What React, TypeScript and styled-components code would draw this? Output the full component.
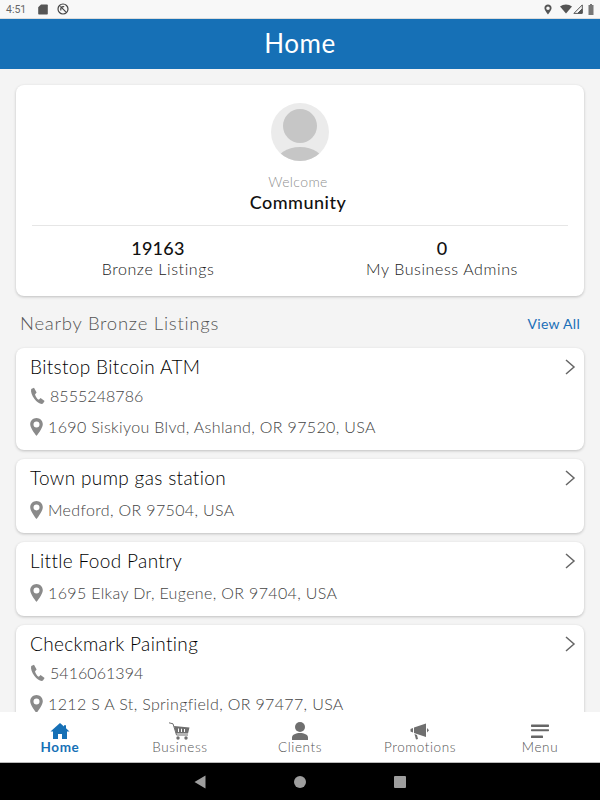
import React from "react";
import styled, { createGlobalStyle } from "styled-components";

const Global = createGlobalStyle`
  html, body { margin: 0; padding: 0; }
  body { font-family: Lato, "Noto Sans", sans-serif; background: #000; }
`;

const Screen = styled.div`
  width: 600px;
  height: 800px;
  display: flex;
  flex-direction: column;
  overflow: hidden;
  background: #f4f4f4;
`;

const StatusBar = styled.div`
  height: 18px;
  flex: none;
  display: flex;
  align-items: center;
  padding: 0 6px;
  background: #f8f8f8;
  border-bottom: 1px solid #dcdcdc;
  color: #666;
  font: 400 10.5px Roboto, sans-serif;
`;

const StatusLeft = styled.div`
  display: flex;
  align-items: center;
  gap: 9px;
  flex: 1;
  & > span { margin-right: 3px; }
`;

const StatusRight = styled.div`
  display: flex;
  align-items: center;
  gap: 5px;
`;

const Header = styled.header`
  height: 50px;
  flex: none;
  background: #1670b6;
  color: #fff;
  display: flex;
  align-items: center;
  justify-content: center;
  padding-bottom: 2px;
  box-sizing: border-box;
  font-size: 26px;
  font-weight: 400;
  letter-spacing: 0.6px;
`;

const Content = styled.main`
  flex: 1;
  min-height: 0;
  overflow: hidden;
  padding: 16px 16px 0;
`;

const Card = styled.section`
  background: #fff;
  border-radius: 8px;
  box-shadow: 0 1px 3px rgba(0, 0, 0, 0.22);
`;

const ProfileCard = styled(Card)`
  height: 211px;
  padding-top: 18px;
  box-sizing: border-box;
  display: flex;
  flex-direction: column;
  align-items: center;
`;

const Greeting = styled.div`
  margin-top: 12px;
  padding-right: 4px;
  text-align: center;
`;

const Welcome = styled.div`
  font-size: 14px;
  line-height: 18px;
  font-weight: 300;
  color: #8f8f8f;
  letter-spacing: 0.4px;
`;

const Name = styled.div`
  font-size: 18px;
  line-height: 23px;
  color: #111;
  font-weight: 500;
  letter-spacing: 0.5px;
`;

const Divider = styled.hr`
  align-self: stretch;
  margin: 11px 16px 0;
  border: none;
  border-top: 1px solid #e6e6e6;
`;

const Stats = styled.div`
  align-self: stretch;
  padding-top: 11px;
  display: grid;
  grid-template-columns: 1fr 1fr;
`;

const Stat = styled.div`
  text-align: center;
`;

const StatValue = styled.div`
  font-size: 18px;
  line-height: 22px;
  font-weight: 500;
  color: #111;
  letter-spacing: 0.3px;
`;

const StatLabel = styled.div`
  font-size: 16px;
  line-height: 20px;
  font-weight: 300;
  color: #222;
  letter-spacing: 0.6px;
`;

const SectionHead = styled.div`
  display: flex;
  justify-content: space-between;
  align-items: center;
  height: 52px;
  padding: 2px 4px 0 4px;
  box-sizing: border-box;
`;

const SectionTitle = styled.h2`
  margin: 0;
  font-size: 18.5px;
  font-weight: 300;
  color: #555;
  letter-spacing: 0.75px;
`;

const ViewAll = styled.a`
  font-size: 14px;
  font-weight: 400;
  color: #1a6fb8;
  letter-spacing: 0.3px;
`;

const List = styled.div`
  display: flex;
  flex-direction: column;
  gap: 9px;
`;

const ListingCard = styled(Card)`
  position: relative;
  padding: 6px 14px 11px;
`;

const ListingName = styled.div`
  font-size: 19px;
  line-height: 25px;
  font-weight: 300;
  color: #000;
  letter-spacing: 0.35px;
`;

const Detail = styled.div`
  display: flex;
  align-items: center;
  gap: 4px;
  margin-top: 7px;
  height: 25px;
  font-size: 16px;
  font-weight: 300;
  color: #444;
  letter-spacing: 0.35px;
`;

const PhoneDetail = styled(Detail)`
  margin-top: 4px;
  margin-bottom: -1px;
  letter-spacing: 0.05px;
`;

const Chevron = styled.svg`
  position: absolute;
  right: 8px;
  top: 11px;
`;

const BottomNav = styled.nav`
  height: 50px;
  flex: none;
  background: #fff;
  display: grid;
  grid-template-columns: repeat(5, 1fr);
  border-bottom: 1px solid #bbb;
`;

const NavItem = styled.div<{ $active?: boolean }>`
  display: flex;
  flex-direction: column;
  align-items: center;
  justify-content: flex-start;
  padding-top: 10px;
  font-size: 13.5px;
  line-height: 14px;
  font-weight: ${(p) => (p.$active ? 700 : 300)};
  color: ${(p) => (p.$active ? "#1670b6" : "#555")};
  letter-spacing: 0.6px;
`;

const NavIcon = styled.svg`
  display: block;
  height: 18px;
  width: 24px;
`;

const SystemBar = styled.div`
  height: 37px;
  flex: none;
  background: #000;
  display: grid;
  grid-template-columns: repeat(3, 100px);
  justify-content: center;
  align-items: center;
  justify-items: center;
`;

const Phone = () => (
  <svg width="16" height="18" viewBox="0 0 16 18" fill="#8a8a8a">
    <path d="M1.2 2 L4 0.8 L6.6 5.6 L5 7.5 C5.5 9.5 7 12 8.8 12.8 L10.6 11 L14.6 14 L13 16.6 C11 17.8 7 15.6 4.5 12 C2 8.5 0.4 5 1.2 2 Z" />
  </svg>
);

const Pin = () => (
  <svg width="14" height="18" viewBox="0 0 14 18">
    <path fillRule="evenodd" fill="#8a8a8a" d="M6.5 0 C3 0 0.2 2.8 0.2 6.3 C0.2 10.5 6.5 18 6.5 18 C6.5 18 12.8 10.5 12.8 6.3 C12.8 2.8 10 0 6.5 0 Z M6.5 3.4 A3 3 0 1 1 6.5 9.4 A3 3 0 1 1 6.5 3.4 Z" />
  </svg>
);

type Listing = { name: string; phone?: string; address: string };

const listings: Listing[] = [
  { name: "Bitstop Bitcoin ATM", phone: "8555248786", address: "1690 Siskiyou Blvd, Ashland, OR 97520, USA" },
  { name: "Town pump gas station", address: "Medford, OR 97504, USA" },
  { name: "Little Food Pantry", address: "1695 Elkay Dr, Eugene, OR 97404, USA" },
  { name: "Checkmark Painting", phone: "5416061394", address: "1212 S A St, Springfield, OR 97477, USA" },
];

export default function App() {
  return (
    <Screen>
      <Global />
      <StatusBar>
        <StatusLeft>
          <span>4:51</span>
          <svg width="10" height="11" viewBox="0 0 10 11" fill="#555">
            <path d="M3 0.5 H9 A0.8 0.8 0 0 1 9.8 1.3 V9.7 A0.8 0.8 0 0 1 9 10.5 H1 A0.8 0.8 0 0 1 0.2 9.7 V3.3 Z" />
          </svg>
          <svg width="12" height="12" viewBox="0 0 12 12" fill="none" stroke="#444" strokeWidth="1.2">
            <circle cx="6" cy="6" r="5" />
            <path d="M3.4 3.4 L8.8 8.8" />
            <path d="M4 7.4 A2.6 2.6 0 0 1 7.2 3.8" />
          </svg>
        </StatusLeft>
        <StatusRight>
          <svg width="8" height="11" viewBox="0 0 9 12">
            <path fillRule="evenodd" fill="#555" d="M4.5 0.5 C2.2 0.5 0.5 2.2 0.5 4.4 C0.5 7 4.5 11.5 4.5 11.5 C4.5 11.5 8.5 7 8.5 4.4 C8.5 2.2 6.8 0.5 4.5 0.5 Z M4.5 2.5 A2 2 0 1 1 4.5 6.5 A2 2 0 1 1 4.5 2.5 Z" />
          </svg>
          <svg width="12" height="10" viewBox="0 0 12 10" fill="#555" style={{ marginLeft: 3 }}>
            <path d="M0 2.6 C3.4 -0.2 8.6 -0.2 12 2.6 L6 9.6 Z" />
          </svg>
          <svg width="10" height="10" viewBox="0 0 10 10" fill="none" stroke="#555" style={{ marginLeft: -4 }}>
            <path d="M9.3 0.9 V9.4 H0.9 Z" />
            <path d="M9 5 V9 H5 Z" fill="#555" />
          </svg>
          <svg width="6" height="11" viewBox="0 0 6 11" fill="#777">
            <path d="M2 0 H4 V1 H5.5 V11 H0.5 V1 H2 Z" />
          </svg>
        </StatusRight>
      </StatusBar>
      <Header>Home</Header>
      <Content>
        <ProfileCard>
          <svg width="58" height="58" viewBox="0 0 58 58">
            <defs>
              <clipPath id="avatar-clip">
                <circle cx="29" cy="29" r="29" />
              </clipPath>
            </defs>
            <circle cx="29" cy="29" r="29" fill="#ebebeb" />
            <g clipPath="url(#avatar-clip)" fill="#c6c6c6">
              <circle cx="29" cy="23" r="17" />
              <ellipse cx="29" cy="60" rx="24" ry="16" />
            </g>
          </svg>
          <Greeting>
            <Welcome>Welcome</Welcome>
            <Name>Community</Name>
          </Greeting>
          <Divider />
          <Stats>
            <Stat>
              <StatValue>19163</StatValue>
              <StatLabel>Bronze Listings</StatLabel>
            </Stat>
            <Stat>
              <StatValue>0</StatValue>
              <StatLabel>My Business Admins</StatLabel>
            </Stat>
          </Stats>
        </ProfileCard>
        <SectionHead>
          <SectionTitle>Nearby Bronze Listings</SectionTitle>
          <ViewAll>View All</ViewAll>
        </SectionHead>
        <List>
          {listings.map((l) => (
            <ListingCard key={l.name}>
              <ListingName>{l.name}</ListingName>
              <Chevron width="12" height="16" viewBox="0 0 12 16" fill="none" stroke="#666" strokeWidth="1.5">
                <path d="M2 1 L10 8 L2 15" />
              </Chevron>
              {l.phone && (
                <PhoneDetail>
                  <Phone />
                  {l.phone}
                </PhoneDetail>
              )}
              <Detail>
                <Pin />
                {l.address}
              </Detail>
            </ListingCard>
          ))}
        </List>
      </Content>
      <BottomNav>
        <NavItem $active>
          <NavIcon viewBox="0 0 24 18" fill="#1670b6">
            <path d="M12 1 L2.5 9.5 H5 V17 H10 V12 H14 V17 H19 V9.5 H21.5 L18 6.3 V3.2 H16 V4.5 Z" />
          </NavIcon>
          Home
        </NavItem>
        <NavItem>
          <NavIcon viewBox="0 0 24 18" fill="#6f6f6f">
            <path d="M1 0.8 L5 1.8 L8.5 13 H20" fill="none" stroke="#6f6f6f" strokeWidth="1" />
            <path fillRule="evenodd" d="M6 4 L21.5 5.5 L20 11.5 H8 Z M10 6.5 V10 H11 V6.5 Z M13 6.8 V10 H14 V6.8 Z M16 7 V10 H17 V7 Z" />
            <circle cx="10" cy="16" r="1.7" />
            <circle cx="18" cy="16" r="1.7" />
          </NavIcon>
          Business
        </NavItem>
        <NavItem>
          <NavIcon viewBox="0 0 24 18" fill="#6f6f6f">
            <ellipse cx="12" cy="5" rx="5" ry="5" />
            <path d="M4 18 V15.5 C4 12.5 8 11 12 11 C16 11 20 12.5 20 15.5 V18 Z" />
          </NavIcon>
          Clients
        </NavItem>
        <NavItem>
          <NavIcon viewBox="0 0 24 18" fill="#6f6f6f">
            <path d="M2.5 7 L5 6 V10.5 L2.5 9.5 Z" />
            <path d="M6 5.5 L18 1.5 V15 L6 11 Z" />
            <path d="M19 6 L21 8.2 L19 10.5 Z" />
            <path d="M6.5 12 L9 13 L10 17 L8 17.5 Z" />
          </NavIcon>
          Promotions
        </NavItem>
        <NavItem>
          <NavIcon viewBox="0 0 24 18" fill="#666">
            <rect x="3" y="2.5" width="18" height="2.4" rx="0.6" />
            <rect x="3" y="7.2" width="18" height="2" rx="0.6" />
            <rect x="3" y="13.6" width="12" height="2.4" rx="0.6" />
          </NavIcon>
          Menu
        </NavItem>
      </BottomNav>
      <SystemBar>
        <svg width="12" height="14" viewBox="0 0 12 14" fill="#9e9e9e">
          <path d="M11.5 0.5 V13.5 L0.5 7 Z" />
        </svg>
        <svg width="12" height="12" viewBox="0 0 12 12" fill="#9e9e9e">
          <circle cx="6" cy="6" r="6" />
        </svg>
        <svg width="12" height="12" viewBox="0 0 12 12" fill="#9e9e9e">
          <rect width="12" height="12" rx="1" />
        </svg>
      </SystemBar>
    </Screen>
  );
}
